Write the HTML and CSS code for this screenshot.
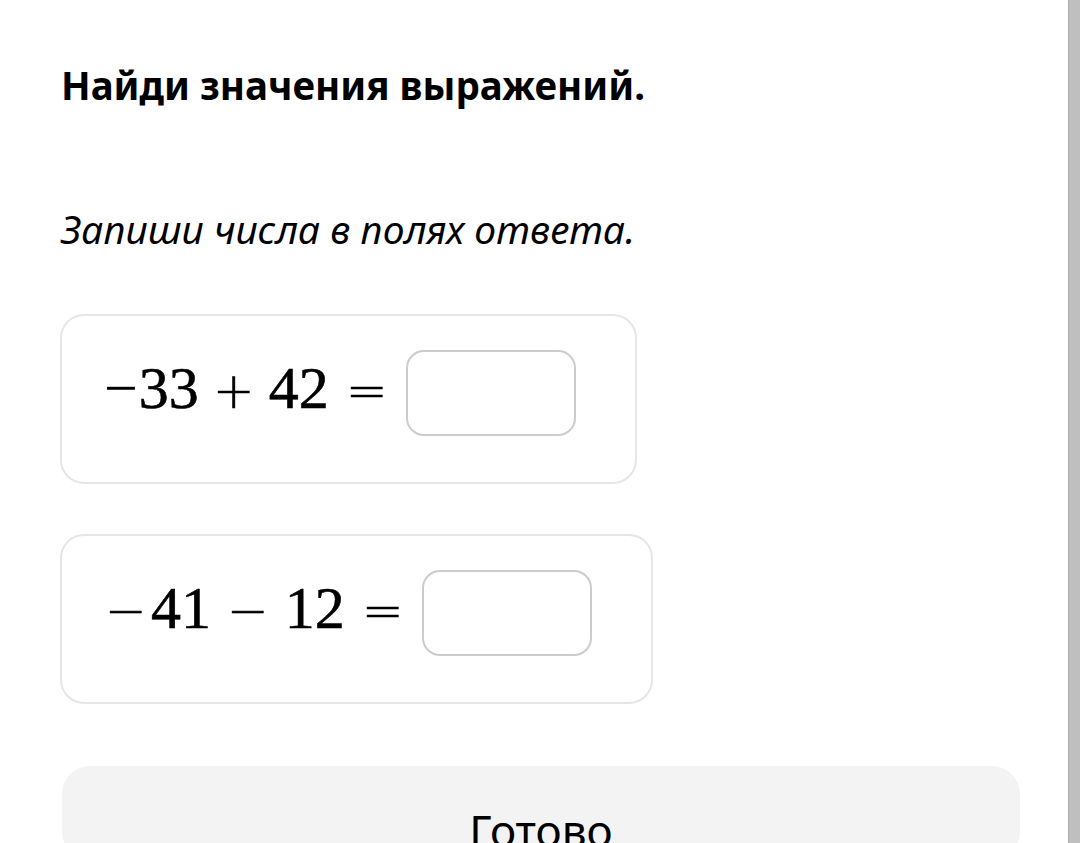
FILE: index.html
```html
<!DOCTYPE html>
<html lang="ru">
<head>
<meta charset="utf-8">
<link rel="stylesheet" href="styles.css">
</head>
<body>
<div class="page">
  <main class="content">
    <h1 class="title">Найди значения выражений.</h1>
    <p class="hint">Запиши числа в полях ответа.</p>
    <div class="card">
      <span class="math"><span class="neg">−</span>33<span class="op">+</span>42<span class="op rel">=</span></span>
      <span class="answer"></span>
    </div>
    <div class="card">
      <span class="math"><span class="op lead">−</span>41<span class="op wide">−</span>12<span class="op rel">=</span></span>
      <span class="answer"></span>
    </div>
    <button class="done">Готово</button>
  </main>
  <div class="scrollbar"></div>
</div>
</body>
</html>
```
FILE: styles.css
```css
html, body {
  margin: 0;
  padding: 0;
  background: #fff;
  height: 100%;
  overflow: hidden;
}
.page {
  display: flex;
  height: 843px;
}
.content {
  flex: 1;
  padding: 57px 0 0 61px;
  display: flex;
  flex-direction: column;
  align-items: flex-start;
  font-family: "Noto Sans", sans-serif;
  color: #000;
}
.scrollbar {
  width: 11px;
  background: #bfbfbf;
  border-left: 1px solid #b0b0b0;
}
.title {
  margin: 0;
  font-size: 38.5px;
  font-weight: 700;
  line-height: 56px;
}
.hint {
  margin: 88px 0 0 0;
  font-size: 39px;
  font-style: italic;
  line-height: 56px;
}
.card {
  display: inline-flex;
  align-items: center;
  border: 2px solid #e6e6e6;
  border-radius: 24px;
  padding: 34px 59px 46px 40px;
  margin: 57px 0 0 -1px;
}
.card + .card { margin-top: 50px; }
.math {
  font-family: "Liberation Serif", serif;
  font-size: 60px;
  line-height: 1;
  margin-right: 18px;
  margin-bottom: 10px;
  white-space: nowrap;
  -webkit-text-stroke: 0.6px #000;
}
.neg { margin-left: 2px; margin-right: 1px; -webkit-text-stroke: 0; }
.op {
  font-family: "DejaVu Sans", sans-serif;
  font-size: 50px;
  font-weight: 200;
  margin: 0 14px;
  -webkit-text-stroke: 0.5px #000;
}
.op.wide { margin: 0 16px; }
.op.lead { margin-left: 3px; margin-right: 4px; }
.op.rel { margin-left: 17px; margin-right: 0; }
.answer {
  display: block;
  width: 166px;
  height: 82px;
  border: 2px solid #cccccc;
  border-radius: 18px;
}
.done {
  margin: 62px 0 0 1px;
  width: 958px;
  height: 140px;
  border: none;
  border-radius: 28px;
  background: #f3f3f3;
  font-family: "Noto Sans", sans-serif;
  font-size: 44px;
  color: #000;
  padding: 34px 0 0 0;
  display: flex;
  justify-content: center;
  align-items: flex-start;
}
```
